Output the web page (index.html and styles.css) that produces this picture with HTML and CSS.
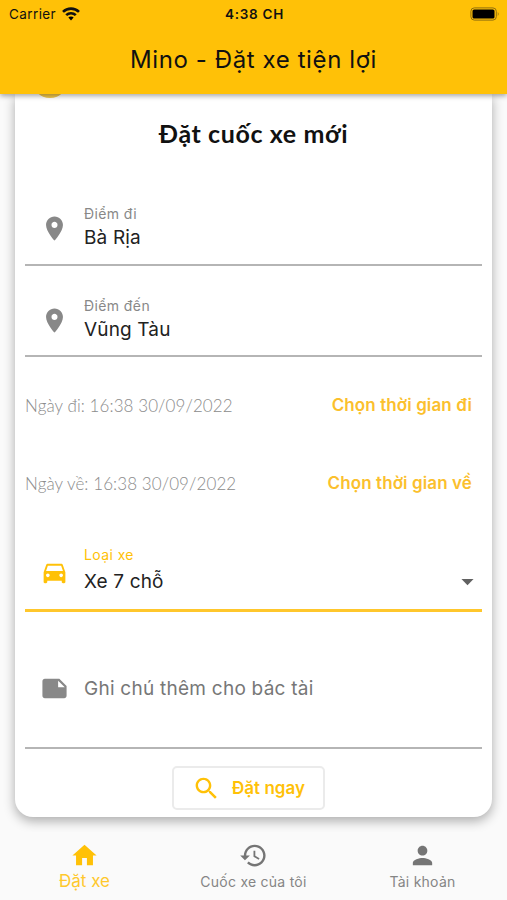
FILE: index.html
```
<!DOCTYPE html>
<html lang="vi">
<head>
  <meta charset="UTF-8" />
  <meta name="viewport" content="width=device-width, initial-scale=1.0">
  <title>Mino - Đặt xe tiện lợi</title>
  <link rel="stylesheet" href="styles.css">
</head>
<body>
  <header class="app-bar">
    <div class="status-bar">
      <div class="carrier">
        <span>Carrier</span>
        <svg class="wifi" viewBox="0 0 18 14">
          <path d="M9 9.4 Q10.8 9.4 11.6 10.6 L9 13.4 L6.4 10.6 Q7.2 9.4 9 9.4 Z" />
          <path class="wave" d="M4.2 8.2 a6.8 6.8 0 0 1 9.6 0" />
          <path class="wave" d="M1 4.9 a11.3 11.3 0 0 1 16 0" />
        </svg>
      </div>
      <span class="clock">4:38 CH</span>
      <svg class="battery" viewBox="0 0 30 14">
        <rect class="battery-case" x="0.9" y="0.9" width="25.4" height="12.2" rx="3.4" />
        <rect x="2.5" y="2.5" width="22" height="9" rx="1.6" />
        <path class="battery-tip" d="M27.8 4.8 q1.8 2.2 0 4.4 z" />
      </svg>
    </div>
    <h1 class="title">Mino - Đặt xe tiện lợi</h1>
  </header>

  <main class="content">
    <form class="card" id="bookingForm">
      <div class="logo-clip"><span class="logo"></span></div>
      <h2 class="card-title">Đặt cuốc xe mới</h2>

      <div class="field">
        <svg class="icon" viewBox="0 0 24 24"><path d="M12 2C8.13 2 5 5.13 5 9c0 5.25 7 13 7 13s7-7.75 7-13c0-3.87-3.13-7-7-7zm0 9.5c-1.38 0-2.5-1.12-2.5-2.5s1.12-2.5 2.5-2.5 2.5 1.12 2.5 2.5-1.12 2.5-2.5 2.5z" /></svg>
        <div class="field-body">
          <span class="label">Điểm đi</span>
          <span class="value">Bà Rịa</span>
        </div>
      </div>

      <div class="field">
        <svg class="icon" viewBox="0 0 24 24"><path d="M12 2C8.13 2 5 5.13 5 9c0 5.25 7 13 7 13s7-7.75 7-13c0-3.87-3.13-7-7-7zm0 9.5c-1.38 0-2.5-1.12-2.5-2.5s1.12-2.5 2.5-2.5 2.5 1.12 2.5 2.5-1.12 2.5-2.5 2.5z" /></svg>
        <div class="field-body">
          <span class="label">Điểm đến</span>
          <span class="value">Vũng Tàu</span>
        </div>
      </div>

      <div class="date-row first">
        <span class="date">Ngày đi: 16:38 30/09/2022</span>
        <button type="button" class="text-button">Chọn thời gian đi</button>
      </div>
      <div class="date-row">
        <span class="date">Ngày về: 16:38 30/09/2022</span>
        <button type="button" class="text-button">Chọn thời gian về</button>
      </div>

      <div class="field select">
        <svg class="icon" viewBox="0 0 24 24"><path d="M18.92 5.01C18.72 4.42 18.16 4 17.5 4h-11c-.66 0-1.21.42-1.42 1.01L3 11v8c0 .55.45 1 1 1h1c.55 0 1-.45 1-1v-1h12v1c0 .55.45 1 1 1h1c.55 0 1-.45 1-1v-8l-2.08-5.99zM6.5 15c-.83 0-1.5-.67-1.5-1.5S5.67 12 6.5 12s1.5.67 1.5 1.5S7.33 15 6.5 15zm11 0c-.83 0-1.5-.67-1.5-1.5s.67-1.5 1.5-1.5 1.5.67 1.5 1.5-.67 1.5-1.5 1.5zM5 10l1.5-4.5h11L19 10H5z" /></svg>
        <div class="field-body">
          <span class="label">Loại xe</span>
          <span class="value">Xe 7 chỗ</span>
        </div>
        <svg class="icon arrow" viewBox="0 0 24 24"><path d="M7 10l5 5 5-5z" /></svg>
      </div>

      <div class="field note">
        <svg class="icon" viewBox="0 0 24 24"><path d="M22 10l-6-6H4c-1.1 0-2 .9-2 2v12.01c0 1.1.9 1.99 2 1.99l16-.01c1.1 0 2-.89 2-1.99v-8zm-7-4.5l5.5 5.5H15V5.5z" /></svg>
        <span class="placeholder">Ghi chú thêm cho bác tài</span>
      </div>

      <button type="submit" class="submit-button">
        <svg class="icon" viewBox="0 0 24 24"><path d="M15.5 14h-.79l-.28-.27C15.41 12.59 16 11.11 16 9.5 16 5.91 13.09 3 9.5 3S3 5.91 3 9.5 5.91 16 9.5 16c1.61 0 3.09-.59 4.23-1.57l.27.28v.79l5 4.99L20.49 19l-4.99-5zm-6 0C7.01 14 5 11.99 5 9.5S7.01 5 9.5 5 14 7.01 14 9.5 11.99 14 9.5 14z" /></svg>
        <span>Đặt ngay</span>
      </button>
    </form>
  </main>

  <nav class="bottom-nav">
    <a class="nav-item active">
      <svg class="icon" viewBox="0 0 24 24"><path d="M10 20v-6h4v6h5v-8h3L12 3 2 12h3v8z" /></svg>
      <span>Đặt xe</span>
    </a>
    <a class="nav-item">
      <svg class="icon" viewBox="0 0 24 24"><path d="M13 3c-4.97 0-9 4.03-9 9H1l3.89 3.89.07.14L9 12H6c0-3.87 3.13-7 7-7s7 3.13 7 7-3.13 7-7 7c-1.93 0-3.68-.79-4.94-2.06l-1.42 1.42C8.27 19.99 10.51 21 13 21c4.97 0 9-4.03 9-9s-4.03-9-9-9zm-1 5v5l4.28 2.54.72-1.21-3.5-2.08V8H12z" /></svg>
      <span>Cuốc xe của tôi</span>
    </a>
    <a class="nav-item">
      <svg class="icon" viewBox="0 0 24 24"><path d="M12 12c2.21 0 4-1.79 4-4s-1.79-4-4-4-4 1.79-4 4 1.79 4 4 4zm0 2c-2.67 0-8 1.34-8 4v2h16v-2c0-2.66-5.33-4-8-4z" /></svg>
      <span>Tài khoản</span>
    </a>
  </nav>
</body>
</html>
```
FILE: styles.css
```
* {
  margin: 0;
  padding: 0;
  box-sizing: border-box;
}

body {
  font-family: 'Inter', 'Roboto', sans-serif;
  background: #fafafa;
  height: 100vh;
  display: flex;
  flex-direction: column;
  overflow: hidden;
  color: #222;
}

.icon {
  width: 29px;
  height: 29px;
  fill: currentColor;
  flex-shrink: 0;
}

.app-bar {
  height: 94px;
  flex-shrink: 0;
  background: #ffc107;
  color: #111;
  box-shadow: 0 2px 5px rgba(0, 0, 0, 0.35);
  position: relative;
  z-index: 2;
}

.status-bar {
  height: 26px;
  padding: 1px 7px 0 9px;
  display: grid;
  grid-template-columns: 1fr auto 1fr;
  align-items: center;
  font-size: 13.5px;
}

.carrier {
  display: flex;
  align-items: center;
  gap: 6px;
  letter-spacing: 0.4px;
}

.wifi {
  width: 18px;
  height: 14px;
}

.wave {
  fill: none;
  stroke: #111;
  stroke-width: 2.6;
}

.clock {
  font-weight: 600;
  letter-spacing: 0.7px;
}

.battery {
  width: 30px;
  height: 14px;
  justify-self: end;
}

.battery-case {
  fill: none;
  stroke: #8f6e10;
  stroke-width: 1;
}

.battery-tip {
  fill: #8f6e10;
}

.title {
  height: 68px;
  line-height: 68px;
  text-align: center;
  font-size: 24px;
  font-weight: 400;
  letter-spacing: 0.6px;
}

.content {
  height: 738px;
  flex-shrink: 0;
  padding: 0 15px;
  overflow: hidden;
}

.card {
  height: 723px;
  padding: 0 10px;
  background: #fff;
  border-radius: 0 0 18px 18px;
  box-shadow: 0 4px 12px rgba(0, 0, 0, 0.32);
  display: flex;
  flex-direction: column;
}

/* bottom edge of the logo left visible under the app bar */
.logo-clip {
  height: 4px;
  padding-left: 7px;
  display: flex;
  align-items: flex-end;
  overflow: hidden;
}

.logo {
  width: 36px;
  height: 36px;
  flex-shrink: 0;
  border-radius: 50%;
  background: #f2c94c;
}

.card-title {
  height: 72px;
  margin-bottom: 4px;
  line-height: 70px;
  text-align: center;
  font-size: 25px;
  font-weight: 700;
  font-family: 'Lato', sans-serif;
  letter-spacing: 0.6px;
  color: #111;
}

.field {
  height: 91.5px;
  padding: 20px 0 0 15px;
  display: flex;
  align-items: center;
  gap: 15px;
  border-bottom: 2px solid #b5b5b5;
  color: #888;
}

.field-body {
  flex: 1;
  margin-bottom: 2px;
  display: flex;
  flex-direction: column;
}

.label {
  font-size: 14px;
  line-height: 21px;
  letter-spacing: 0.4px;
}

.value {
  font-size: 19px;
  line-height: 28px;
  letter-spacing: 0.15px;
  color: #222;
}

.date-row {
  height: 78px;
  padding-right: 10px;
  display: flex;
  align-items: center;
  justify-content: space-between;
}

.date-row.first {
  margin-top: 9px;
}

.date {
  font-family: 'Lato', sans-serif;
  font-size: 17px;
  font-weight: 300;
  letter-spacing: 0.08px;
  color: #8c8c8c;
}

.text-button {
  border: none;
  background: none;
  color: #fbc02d;
  font: 600 17px 'Inter', sans-serif;
  letter-spacing: 0.1px;
}

.select {
  height: 90px;
  padding-top: 15px;
  color: #ffc107;
  border-bottom: 3px solid #ffc72c;
}

.select .field-body {
  margin-bottom: 7px;
}

.select .value {
  margin-top: 3px;
}

.arrow {
  margin-top: 16px;
  color: #616161;
}

.note {
  height: 137px;
  padding-top: 18px;
}

.placeholder {
  font-size: 19px;
  letter-spacing: 0.25px;
  color: #777;
}

.submit-button {
  width: 153px;
  height: 44px;
  margin: 17px 0 0 147px;
  display: flex;
  align-items: center;
  justify-content: center;
  gap: 11px;
  border: 2px solid #ebebeb;
  border-radius: 5px;
  background: #fff;
  color: #ffc107;
  font: 600 17px 'Inter', sans-serif;
}

.bottom-nav {
  height: 68px;
  background: #fafafa;
  display: grid;
  grid-template-columns: 1fr 1fr 1fr;
  position: relative;
}

.nav-item {
  padding-top: 9px;
  display: flex;
  flex-direction: column;
  align-items: center;
  color: #757575;
  font-size: 14px;
  line-height: 24px;
  letter-spacing: 0.25px;
}

.nav-item span {
  color: #858585;
}

.nav-item.active {
  color: #ffc107;
  font-size: 17px;
  line-height: 22px;
  letter-spacing: 0;
}

.nav-item.active span {
  color: #ffc82c;
}
```
